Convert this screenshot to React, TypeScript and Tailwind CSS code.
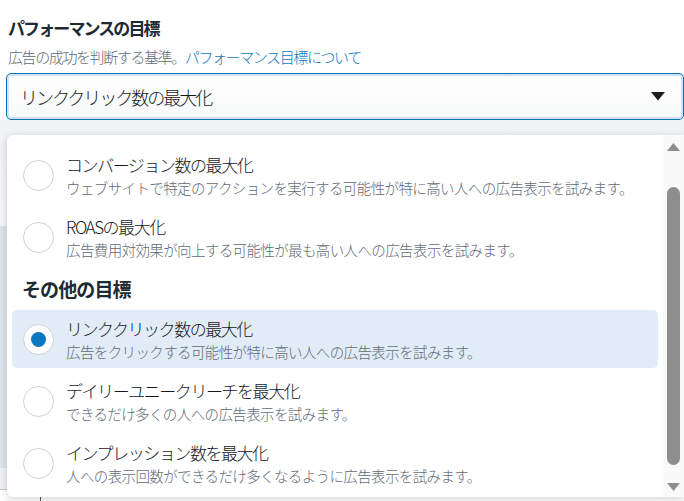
import React from "react";

const font = { fontFamily: '"Noto Sans CJK JP", "Noto Sans", sans-serif' };

type Item = { title: string; desc: string; selected?: boolean };

function Radio({ selected }: { selected?: boolean }) {
  return (
    <div className="w-[31px] h-[31px] shrink-0 rounded-full border border-[#cdd2d8] bg-white flex items-center justify-center">
      {selected && <div className="w-[15px] h-[15px] rounded-full bg-[#0a78be]" />}
    </div>
  );
}

function Row({ item }: { item: Item }) {
  return (
    <div
      className={`mx-[5px] h-[58px] rounded-[5px] flex items-center pl-[11px] gap-[12px] ${
        item.selected ? "bg-[#e1ecf7]" : ""
      }`}
    >
      <Radio selected={item.selected} />
      <div className="flex flex-col pt-[1px] font-light">
        <div className="h-[24px] leading-[24px] text-[17px] tracking-[-1.45px] text-[#15191e]">{item.title}</div>
        <div className="h-[22px] leading-[22px] text-[14.5px] tracking-[-0.62px] text-[#5f6b78]">{item.desc}</div>
      </div>
    </div>
  );
}

export default function App() {
  const top: Item[] = [
    { title: "コンバージョン数の最大化", desc: "ウェブサイトで特定のアクションを実行する可能性が特に高い人への広告表示を試みます。" },
    { title: "ROASの最大化", desc: "広告費用対効果が向上する可能性が最も高い人への広告表示を試みます。" },
  ];
  const other: Item[] = [
    { title: "リンククリック数の最大化", desc: "広告をクリックする可能性が特に高い人への広告表示を試みます。", selected: true },
    { title: "デイリーユニークリーチを最大化", desc: "できるだけ多くの人への広告表示を試みます。" },
    { title: "インプレッション数を最大化", desc: "人への表示回数ができるだけ多くなるように広告表示を試みます。" },
  ];

  return (
    <div className="relative w-[684px] h-[501px] overflow-hidden bg-white" style={font}>
      <div className="pl-[8px] pt-[15px]">
        <div className="h-[26px] leading-[26px] text-[17px] font-bold tracking-[-1.9px] text-[#1c2b33]">
          パフォーマンスの目標
        </div>
        <div className="mt-[4px] h-[24px] leading-[24px] text-[15px] font-light tracking-[-1.4px] text-[#5f6b78]">
          広告の成功を判断する基準。<span className="text-[#0a78be]">パフォーマンス目標について</span>
        </div>
      </div>
      <div className="pl-[6px] pt-[4px]">
        <div className="h-[47px] rounded-[5px] border border-[#0a72b8] shadow-[inset_0_0_0_2px_#cfe3f4] bg-gradient-to-b from-white to-[#f8f9fa] flex items-center pl-[13px] pr-[18px]">
          <span className="flex-1 text-[18px] font-light tracking-[-2px] text-[#15191e] leading-[24px]">リンククリック数の最大化</span>
          <svg width="14" height="9" viewBox="0 0 14 9">
            <path d="M0 0 H14 L7 8.5 Z" fill="#1c1e21" />
          </svg>
        </div>
      </div>
      <div className="flex flex-col">
        <div className="h-[106px] bg-gradient-to-b from-[#f1f2f3] to-[#f5f6f7]" />
        <div className="h-[242px] bg-[#dce4ed]" />
        <div className="h-[22px] bg-[#f0f1f2] border-b border-[#c9cdd2]" />
        <div className="h-[11px] bg-white pl-[40px]">
          <div className="w-[1px] h-full bg-[#555]" />
        </div>
      </div>

      <div className="absolute left-[7px] top-[135px] w-[677px] h-[362px] bg-white rounded-l-[6px] shadow-[0_2px_8px_rgba(0,0,0,0.18)] flex">
        <div className="flex-1 flex flex-col gap-[4px] pt-[11px]">
          {top.map((it) => (
            <Row key={it.title} item={it} />
          ))}
          <div className="h-[36px] flex items-center pl-[15px] pt-[3px] text-[19px] font-bold tracking-[-0.9px] text-[#1c2b33]">
            その他の目標
          </div>
          {other.map((it) => (
            <Row key={it.title} item={it} />
          ))}
        </div>
        <div className="w-[21px] bg-[#f9f9f9] flex flex-col items-center">
          <svg className="mt-[8px]" width="13" height="8" viewBox="0 0 13 8">
            <path d="M6.5 0 L13 8 H0 Z" fill="#8e8e8e" />
          </svg>
          <div className="mt-[36px] w-[13px] h-[278px] rounded-full bg-[#8e8e8e]" />
          <svg className="mt-[18px]" width="13" height="8" viewBox="0 0 13 8">
            <path d="M0 0 H13 L6.5 8 Z" fill="#8e8e8e" />
          </svg>
        </div>
      </div>
    </div>
  );
}
